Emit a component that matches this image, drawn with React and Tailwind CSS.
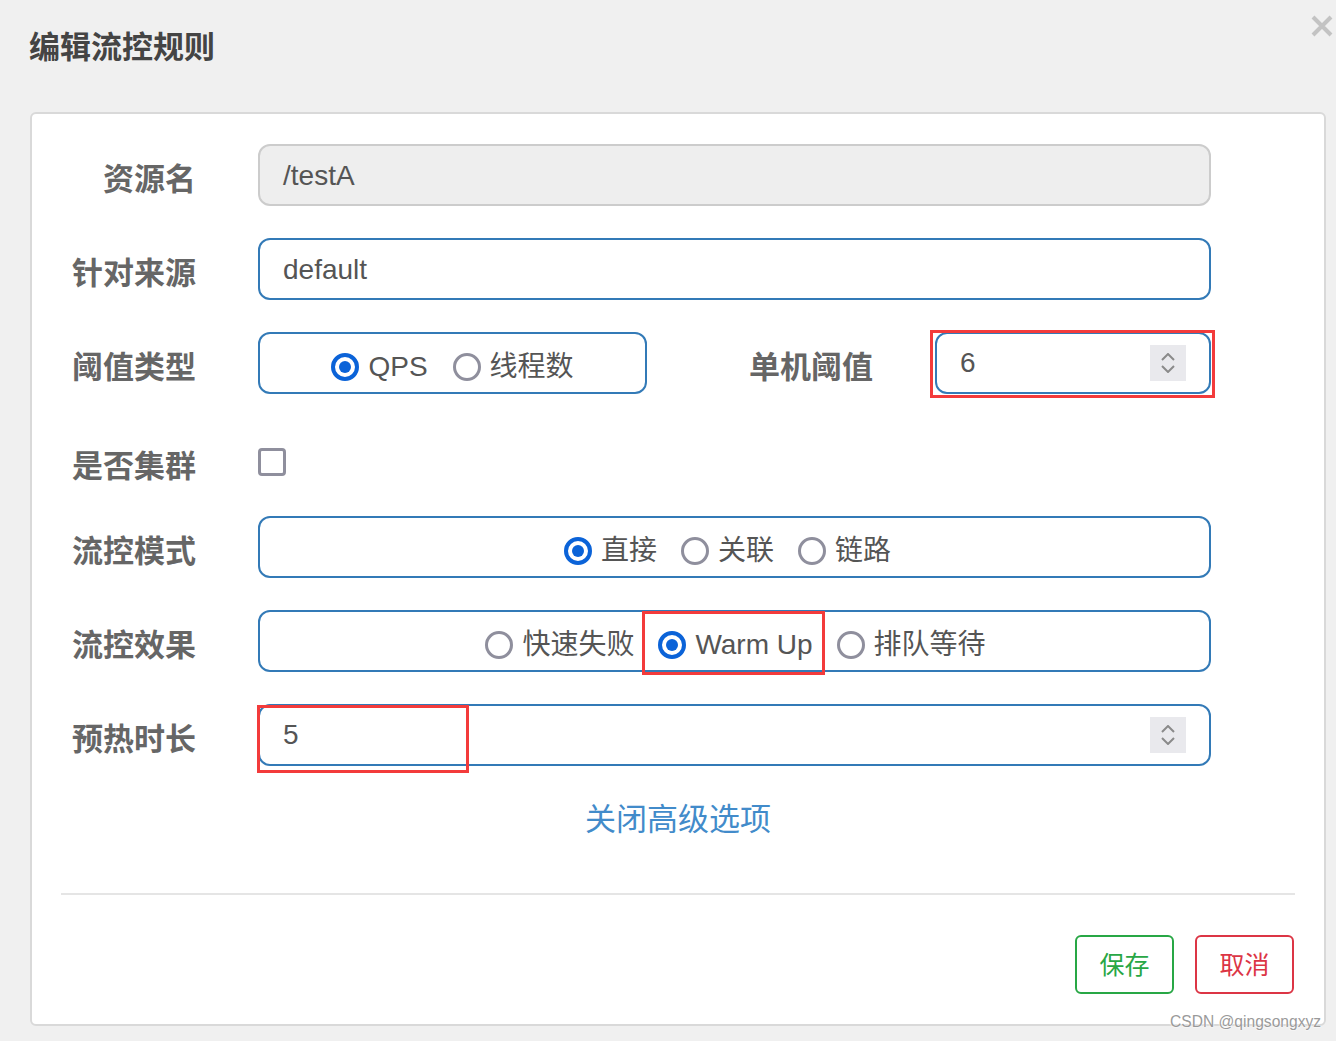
import React from 'react'

const font = { fontFamily: '"Liberation Sans", "Noto Sans CJK SC", sans-serif' }

function Radio({ checked, label }) {
    return (
        <span className='flex items-center'>
            {checked ? (
                <span className='w-[28px] h-[28px] rounded-full border-[4px] border-[#0b63d8] flex items-center justify-center'>
                    <span className='w-[12px] h-[12px] rounded-full bg-[#0b63d8]'></span>
                </span>
            ) : (
                <span className='w-[28px] h-[28px] rounded-full border-[3px] border-[#8f8f9d]'></span>
            )}
            <span className='ml-[9px] text-[28px] leading-[34px] text-[#555]'>{label}</span>
        </span>
    )
}

function Spinner() {
    return (
        <div className='w-[36px] h-[36px] bg-[#e9e9ed] flex flex-col items-center justify-center gap-[4px]'>
            <svg width="14" height="8" viewBox="0 0 14 8"><path d="M1 7 L7 1 L13 7" stroke="#8a8a8a" strokeWidth="2" fill="none" /></svg>
            <svg width="14" height="8" viewBox="0 0 14 8"><path d="M1 1 L7 7 L13 1" stroke="#8a8a8a" strokeWidth="2" fill="none" /></svg>
        </div>
    )
}

function Label({ children }) {
    return <div className='w-[164px] shrink-0 text-right text-[31px] font-bold text-[#666] leading-[36px] pt-[10px]'>{children}</div>
}

export default function App() {
    return (
        <div className='relative w-[1336px] h-[1041px] bg-[#f0f0f0] overflow-hidden' style={font}>
            {/* header */}
            <div className='pt-[30px] pl-[29px] h-[63px]'>
                <h1 className='text-[31px] leading-[36px] font-bold text-[#444]'>编辑流控规则</h1>
            </div>
            <button className='absolute top-[15px] right-[3px] w-[22px] h-[22px]'>
                <svg width="22" height="22" viewBox="0 0 22 22"><path d="M2 2 L20 20 M20 2 L2 20" stroke="#c3c3c3" strokeWidth="4" /></svg>
            </button>

            {/* card */}
            <div className='ml-[30px] mt-[49px] w-[1296px] h-[914px] bg-white border-2 border-[#d9d9d9] rounded-[6px] flex flex-col'>
                <div className='flex flex-col gap-[32px] pt-[30px]'>
                    {/* 资源名 */}
                    <div className='flex items-center w-[1179px] h-[62px]'>
                        <Label>资源名</Label>
                        <div className='ml-[62px] w-[953px] h-[62px] bg-[#eeeeee] border-2 border-[#cccccc] rounded-[12px] flex items-center pl-[23px] pt-[2px] text-[28px] text-[#555]'>/testA</div>
                    </div>
                    {/* 针对来源 */}
                    <div className='flex items-center w-[1179px] h-[62px]'>
                        <Label>针对来源</Label>
                        <div className='ml-[62px] w-[953px] h-[62px] border-2 border-[#337ab7] rounded-[12px] flex items-center pl-[23px] pt-[2px] text-[28px] text-[#555]'>default</div>
                    </div>
                    {/* 阈值类型 */}
                    <div className='flex items-center w-[1179px] h-[62px]'>
                        <Label>阈值类型</Label>
                        <div className='ml-[62px] w-[389px] h-[62px] border-2 border-[#337ab7] rounded-[12px] flex items-center justify-center gap-[25px] pt-[8px]'>
                            <Radio checked label='QPS' />
                            <Radio label='线程数' />
                        </div>
                        <div className='flex-1 text-right pr-[62px] text-[31px] font-bold text-[#666] leading-[36px] pt-[10px]'>单机阈值</div>
                        <div className='relative w-[276px] h-[62px] border-2 border-[#337ab7] rounded-[12px] flex items-center justify-between pl-[23px] pr-[23px] text-[28px] text-[#555]'>
                            <span>6</span>
                            <Spinner />
                            <span className='absolute left-[-7px] right-[-6px] top-[-4px] bottom-[-6px] border-[3px] border-[#f33b3b]'></span>
                        </div>
                    </div>
                    {/* 是否集群 */}
                    <div className='flex items-center w-[1179px] h-[58px] pt-[14px]'>
                        <Label>是否集群</Label>
                        <span className='ml-[62px] w-[28px] h-[28px] border-[3px] border-[#8f8f9d] rounded-[4px]'></span>
                    </div>
                    {/* 流控模式 */}
                    <div className='flex items-center w-[1179px] h-[62px]'>
                        <Label>流控模式</Label>
                        <div className='ml-[62px] w-[953px] h-[62px] border-2 border-[#337ab7] rounded-[12px] flex items-center justify-center gap-[24px] pr-[14px] pt-[8px]'>
                            <Radio checked label='直接' />
                            <Radio label='关联' />
                            <Radio label='链路' />
                        </div>
                    </div>
                    {/* 流控效果 */}
                    <div className='flex items-center w-[1179px] h-[62px]'>
                        <Label>流控效果</Label>
                        <div className='ml-[62px] w-[953px] h-[62px] border-2 border-[#337ab7] rounded-[12px] flex items-center justify-center gap-[24px] pt-[8px] pl-[2px]'>
                            <Radio label='快速失败' />
                            <span className='relative'>
                                <Radio checked label='Warm Up' />
                                <span className='absolute left-[-16px] right-[-12px] top-[-17px] bottom-[-13px] border-[3px] border-[#f33b3b]'></span>
                            </span>
                            <Radio label='排队等待' />
                        </div>
                    </div>
                    {/* 预热时长 */}
                    <div className='flex items-center w-[1179px] h-[62px]'>
                        <Label>预热时长</Label>
                        <div className='relative ml-[62px] w-[953px] h-[62px] border-2 border-[#337ab7] rounded-[12px] flex items-center justify-between pl-[23px] pr-[23px] text-[28px] text-[#555]'>
                            <span>5</span>
                            <Spinner />
                            <span className='absolute left-[-3px] top-[-1px] w-[212px] h-[68px] border-[3px] border-[#f33b3b]'></span>
                        </div>
                    </div>
                </div>

                <div className='mt-[36px] text-center text-[31px] leading-[36px] text-[#428bca]'>关闭高级选项</div>

                <div className='mx-[29px] mt-[55px] h-[2px] bg-[#e5e5e5]'></div>

                <div className='flex justify-end gap-[21px] pr-[30px] mt-[40px]'>
                    <button className='w-[99px] h-[59px] border-2 border-[#28a745] rounded-[6px] text-[25px] pt-[2px] text-[#28a745]'>保存</button>
                    <button className='w-[99px] h-[59px] border-2 border-[#dc3545] rounded-[6px] text-[25px] pt-[2px] text-[#dc3545]'>取消</button>
                </div>
            </div>

            <div className='absolute left-[1170px] top-[1012px] text-[15.6px] leading-[20px] text-[#9a9a9a] [text-shadow:0_0_2px_#fff,0_0_2px_#fff]'>CSDN @qingsongxyz</div>
        </div>
    )
}
